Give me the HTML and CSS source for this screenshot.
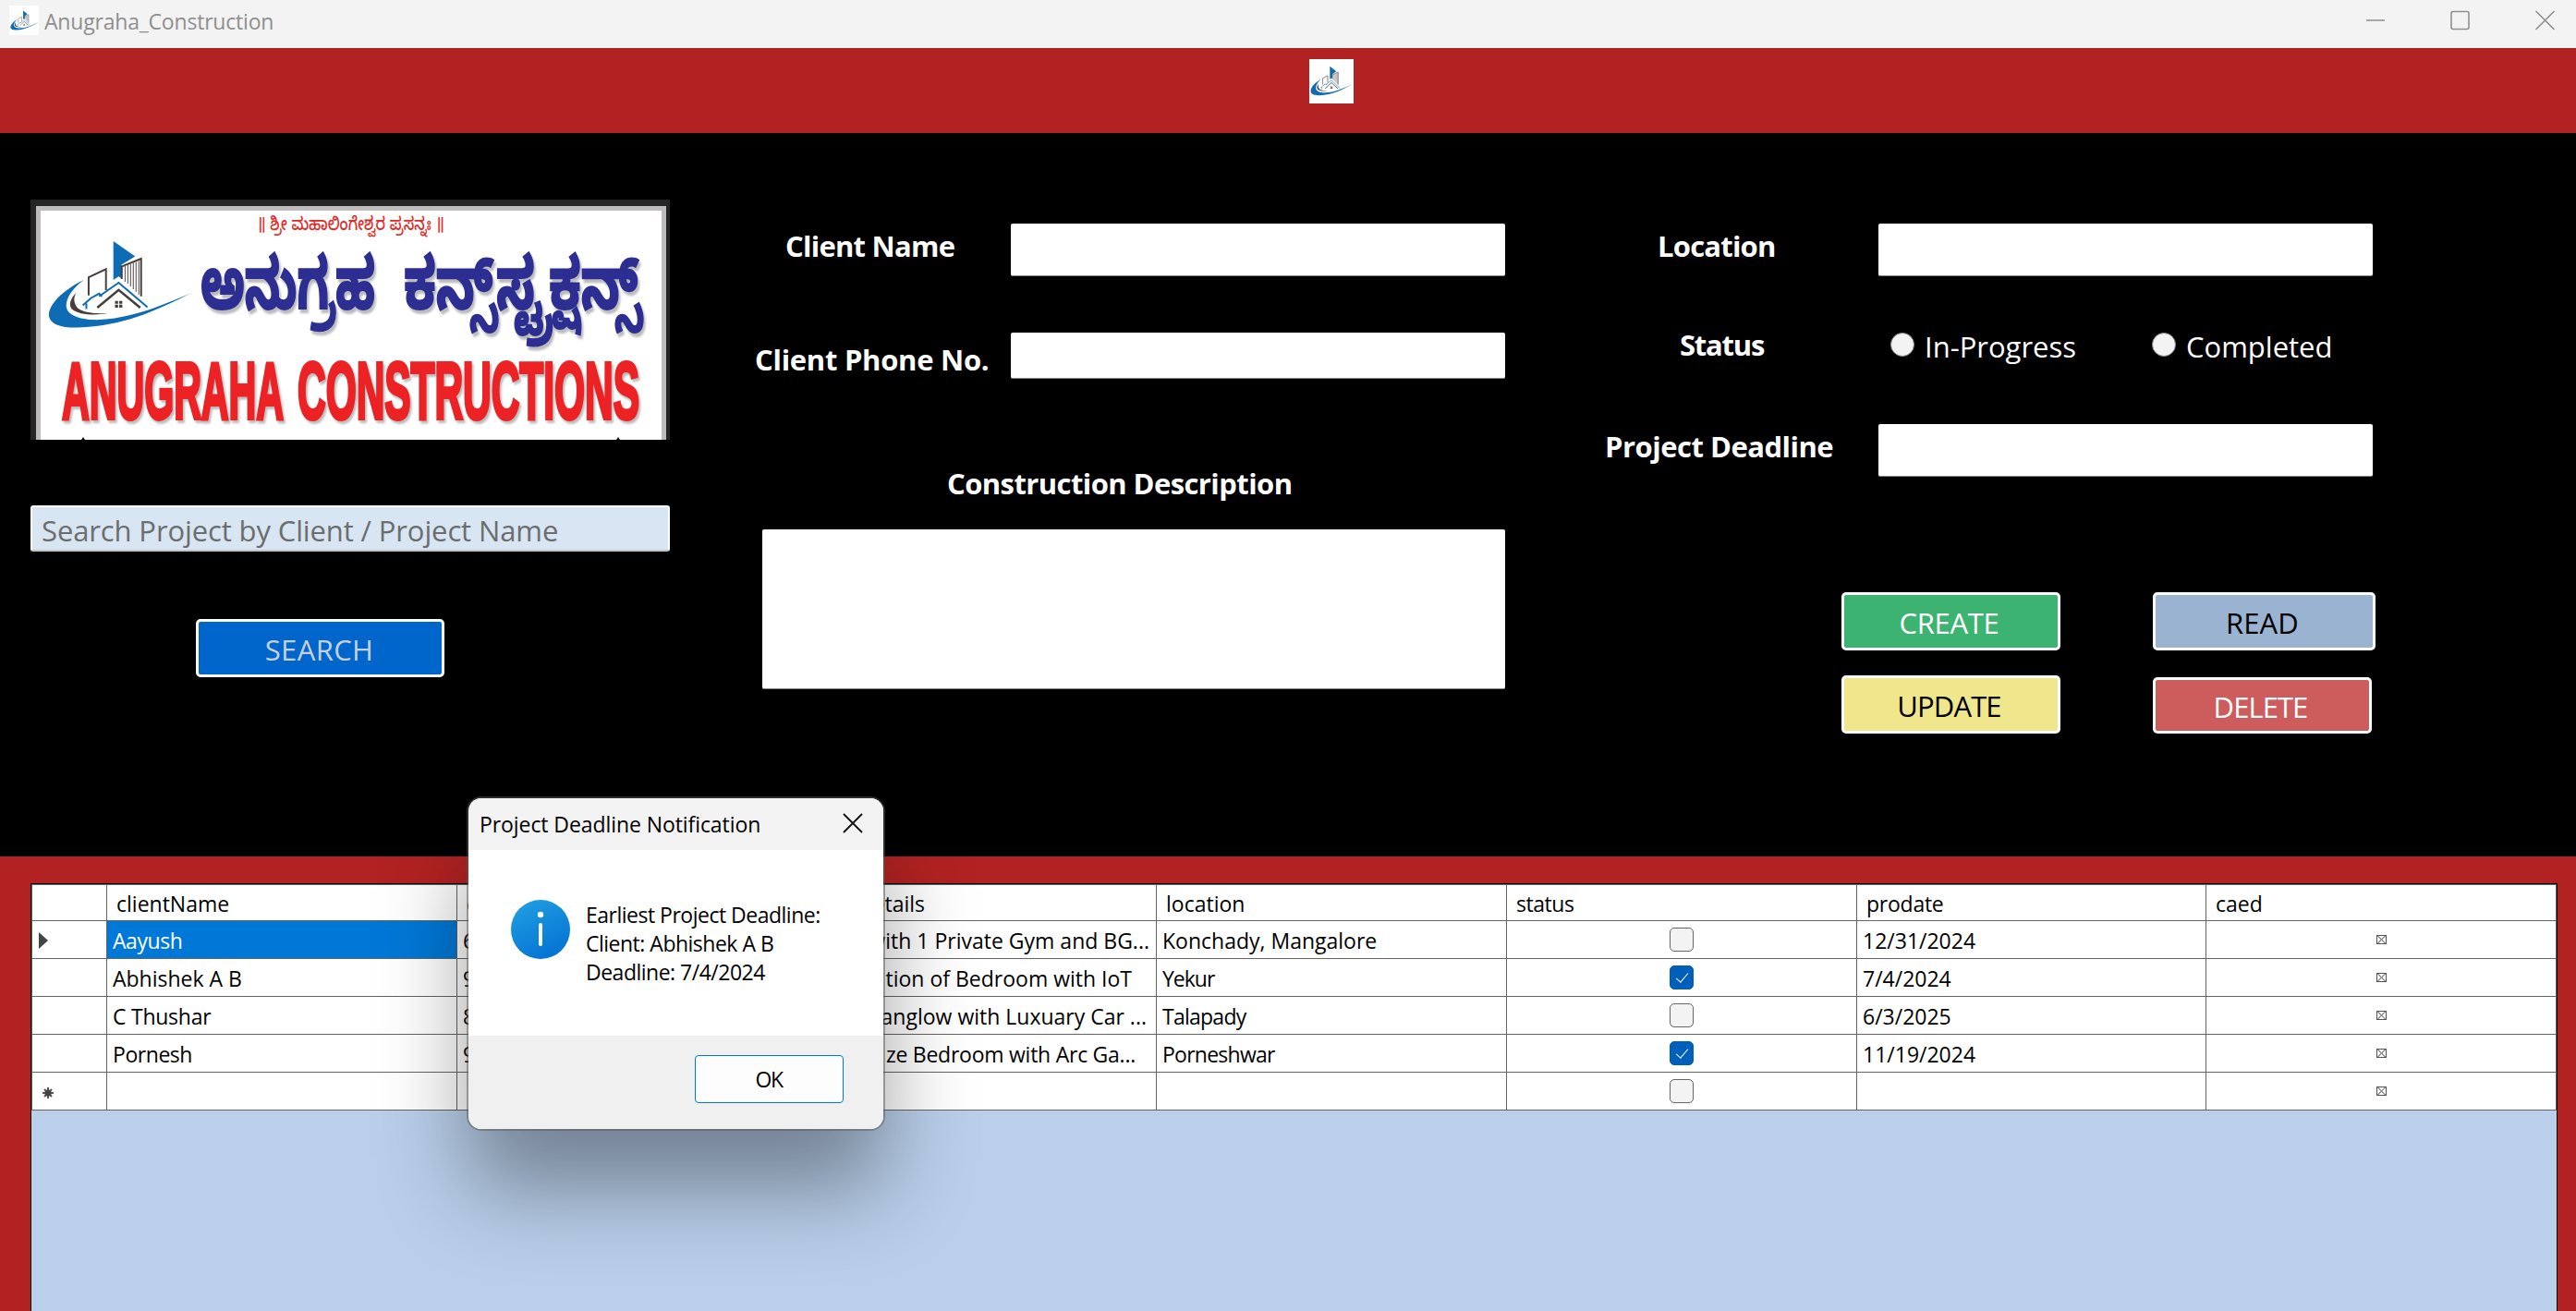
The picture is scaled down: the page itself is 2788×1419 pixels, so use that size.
FILE: index.html
```html
<!DOCTYPE html>
<html lang="en">
<head>
<meta charset="utf-8">
<title>Anugraha_Construction</title>
<link rel="stylesheet" href="styles.css">
</head>
<body>
<svg class="defs" width="0" height="0" aria-hidden="true">
  <symbol id="logo" viewBox="50 258 160 100" preserveAspectRatio="none">
    <path fill="#0d6cb4" d="M90 303C66 315 51 331 52 343C54 353 67 356 84 355.500C132 354 168 338 208.500 317C172 333 140 346 104 347C84 347 70 341 71 330C72 320 80 311 90 303Z"/>
    <path fill="#453e3c" d="M82 317C76 323 73 330 77 335C85 342 103 342 116 340C101 340 86 339 82 332C79 327 79 322 82 317Z"/>
    <path fill="#0d6cb4" d="M122.600 260L146.500 277L131.500 286L131.500 301L128.400 299L122.600 303Z"/>
    <path fill="none" stroke="#453e3c" stroke-width="2" d="M95.500 320V300L114.500 291V314M131.800 302V288L153 279.500V321"/>
    <path fill="none" stroke="#6b6663" stroke-width="1.200" d="M135.500 287V305M138.500 286V307M141.500 285V310M144.500 284V313M147.500 283V316M150.500 282V319"/>
    <path fill="none" stroke="#0d6cb4" stroke-width="2" d="M89 331L98 323L107 318L110 321M93 335V329M107 321L128.400 306L160 333"/>
    <path fill="none" stroke="#453e3c" stroke-width="2.600" d="M105 333.500L128.400 314L152 333.500"/>
    <path fill="#453e3c" d="M124.400 326h3.400v3.300h-3.400zM129 326h3.400v3.300H129zM124.400 330.300h3.400v3.300h-3.400zM129 330.300h3.400v3.300H129z"/>
  </symbol>
</svg>

<header class="titlebar">
  <span class="app-icon"><svg><use href="#logo"/></svg></span>
  <span class="app-title">Anugraha_Construction</span>
  <svg class="window-controls" viewBox="0 0 206 22" fill="none" stroke="#8e8e8e" stroke-width="1.600">
    <path d="M1 11h20M184.500 1l20 20M204.500 1l-20 20"/>
    <rect x="93" y="1.500" width="19" height="19" rx="2"/>
  </svg>
</header>

<div class="banner"><span class="banner-icon"><svg><use href="#logo"/></svg></span></div>

<main class="form">
  <section class="brand">
    <svg class="sign" viewBox="33 216 692 260">
      <rect x="33" y="216" width="692" height="260" fill="#252525"/>
      <rect x="39" y="223" width="682" height="253" fill="#bdbbbc"/>
      <rect x="44" y="228" width="672" height="248" fill="#fff"/>
      <svg x="51" y="259" width="158" height="98"><use href="#logo"/></svg>
      <text class="sign-top" x="278" y="249" textLength="203" lengthAdjust="spacingAndGlyphs">॥ ಶ್ರೀ ಮಹಾಲಿಂಗೇಶ್ವರ ಪ್ರಸನ್ನಃ ॥</text>
      <text class="sign-kn" x="217" y="334" textLength="189" lengthAdjust="spacingAndGlyphs">ಅನುಗ್ರಹ</text>
      <text class="sign-kn" x="437" y="334" textLength="257" lengthAdjust="spacingAndGlyphs">ಕನ್ಸ್‌ಸ್ಟ್ರಕ್ಷನ್ಸ್</text>
      <text class="sign-en" x="67" y="453" textLength="240" lengthAdjust="spacingAndGlyphs">ANUGRAHA</text>
      <text class="sign-en" x="322" y="453" textLength="370" lengthAdjust="spacingAndGlyphs">CONSTRUCTIONS</text>
      <path d="M88 476l2-3 2 3zM667 476l2-3 2 3z" fill="#111"/>
    </svg>
    <div class="search-box"><span>Search Project by Client / Project Name</span></div>
    <div class="btn btn-search"><span>SEARCH</span></div>
  </section>

  <section class="client">
    <div class="row row-name"><label>Client Name</label><div class="input"></div></div>
    <div class="row row-phone"><label>Client Phone No.</label><div class="input"></div></div>
    <label class="desc-label">Construction Description</label>
    <div class="input desc"></div>
  </section>

  <section class="project">
    <div class="row row-location"><label>Location</label><div class="input"></div></div>
    <div class="row row-status"><label>Status</label>
      <div class="radio"><i></i><span>In-Progress</span></div>
      <div class="radio radio-done"><i></i><span>Completed</span></div>
    </div>
    <div class="row row-deadline"><label>Project Deadline</label><div class="input"></div></div>
    <div class="actions">
      <div class="btn btn-create"><span>CREATE</span></div>
      <div class="btn btn-read"><span>READ</span></div>
      <div class="btn btn-update"><span>UPDATE</span></div>
      <div class="btn btn-delete"><span>DELETE</span></div>
    </div>
  </section>
</main>

<section class="records">
  <div class="grid">
    <div class="tr th"><div></div><div>clientName</div><div>c</div><div class="details-head">details</div><div>location</div><div class="tight">status</div><div class="snug">prodate</div><div>caed</div></div>
    <div class="tr"><div class="mark"><svg width="10" height="18"><path d="M0 0L10 9L0 18Z" fill="#444"/></svg></div><div class="selected tight">Aayush</div><div>6</div><div class="details d1"><span>with 1 Private Gym and BG...</span></div><div>Konchady, Mangalore</div><div class="center"><i class="check"></i></div><div>12/31/2024</div><div class="center"><i class="missing"></i></div></div>
    <div class="tr"><div></div><div>Abhishek A B</div><div>9</div><div class="details d2"><span>tion of Bedroom with IoT</span></div><div class="tightest">Yekur</div><div class="center"><i class="check on"></i></div><div>7/4/2024</div><div class="center"><i class="missing"></i></div></div>
    <div class="tr"><div></div><div class="snug">C Thushar</div><div>8</div><div class="details d3"><span>Banglow with Luxuary Car ...</span></div><div class="tighter">Talapady</div><div class="center"><i class="check"></i></div><div>6/3/2025</div><div class="center"><i class="missing"></i></div></div>
    <div class="tr"><div></div><div class="tight">Pornesh</div><div>9</div><div class="details d4 snug"><span>ze Bedroom with Arc Ga...</span></div><div class="tighter">Porneshwar</div><div class="center"><i class="check on"></i></div><div>11/19/2024</div><div class="center"><i class="missing"></i></div></div>
    <div class="tr"><div class="mark mark-new"><svg width="12" height="12"><path d="M6 0V12M0 6H12M2 2L10 10M10 2L2 10" stroke="#555" stroke-width="2"/><circle cx="6" cy="6" r="3.600" fill="#444"/></svg></div><div></div><div></div><div></div><div></div><div class="center"><i class="check"></i></div><div></div><div class="center"><i class="missing"></i></div></div>
  </div>
</section>

<div class="dialog">
  <div class="dialog-title"><span>Project Deadline Notification</span>
    <svg width="22" height="22" viewBox="0 0 22 22" stroke="#111" stroke-width="1.800"><path d="M1 1l20 20M21 1L1 21"/></svg>
  </div>
  <div class="dialog-body">
    <svg width="64" height="64" viewBox="0 0 64 64">
      <defs><linearGradient id="info" x1="0.200" y1="0" x2="0.700" y2="1"><stop offset="0" stop-color="#1f9ee2"/><stop offset="1" stop-color="#0472d3"/></linearGradient></defs>
      <circle cx="32" cy="32" r="32" fill="url(#info)"/><circle cx="32" cy="16" r="3.200" fill="#fff"/><rect x="30" y="25" width="4" height="25" rx="2" fill="#f4f9fd"/>
    </svg>
    <p>Earliest Project Deadline:<br>Client: Abhishek A B<br>Deadline: 7/4/2024</p>
  </div>
  <div class="dialog-foot"><div class="ok">OK</div></div>
</div>
</body>
</html>
```
FILE: styles.css
```css
* { box-sizing: border-box; }
body {
  margin: 0; width: 2788px; height: 1419px; overflow: hidden;
  display: flex; flex-direction: column; position: relative;
  background: #000; color: #000;
  font: 23px/32px "Open Sans", "Noto Sans", sans-serif;
}
span, label { white-space: nowrap; }
.defs { position: absolute; }

.titlebar { height: 52px; background: #f3f3f3; display: flex; color: #8f8f8f; padding: 6px 22px 0 10px; }
.app-icon { width: 32px; height: 32px; background: #fff; padding: 5px 0 0 1px; }
.app-icon svg { display: block; width: 31px; height: 22px; }
.app-title { margin: 1px 0 0 6px; letter-spacing: -.2px; }
.window-controls { width: 206px; height: 22px; margin: 5px 0 0 auto; }

.banner { height: 92px; background: #b22222; display: flex; padding: 12px 0 0 1417px; }
.banner-icon { width: 48px; height: 48px; background: #fff; padding: 7px 0 0 1px; }
.banner-icon svg { display: block; width: 47px; height: 33px; }

.form { height: 783px; display: flex; font-size: 31px; line-height: 44px; color: #fff; }
.brand { width: 692px; margin-left: 33px; padding-top: 72px; }
.sign { display: block; width: 692px; height: 260px; }
.sign-top { font: 500 20px "Noto Sans Kannada", "Noto Sans", sans-serif; fill: #e02c28; }
.sign-kn { font: bold 77px "Noto Sans Kannada", "Noto Sans", sans-serif; fill: #2c2e92; stroke: #2c2e92; stroke-width: 2; filter: drop-shadow(2px 4px 1px #bbb); }
.sign-en { font: bold 88px "Liberation Sans Narrow", "Liberation Sans", sans-serif; fill: #ec2224; stroke: #ec2224; stroke-width: 4; filter: drop-shadow(2px 3px 1px #bbb); }
.search-box { margin-top: 71px; height: 50px; border: 2px solid #fff; border-bottom-color: #c4c4c4; border-radius: 3px; background: #d8e5f2; color: #6d6d6d; padding: 3px 0 0 10px; letter-spacing: -.12px; }

.btn { border: 3px solid #fff; border-radius: 5px; height: 63px; display: flex; justify-content: center; padding: 8px 4px 0 0; }
.btn-search { width: 269px; margin: 73px 0 0 179px; padding-right: 2px; background: #0066cc; color: #c5d0da; letter-spacing: .4px; }

.client { width: 819px; margin-left: 85px; padding-top: 98px; }
.row { display: flex; justify-content: flex-end; }
.row label, .desc-label { font-weight: bold; }
.input { width: 535px; height: 57px; background: #fff; border-bottom: 1px solid #858585; border-radius: 2px; flex: none; }
.row label { flex: 1; }
.row-name label { padding: 2px 0 0 40px; letter-spacing: -.76px; }
.row-phone { margin-top: 61px; }
.row-phone label { padding: 7px 0 0 7px; letter-spacing: -.28px; }
.row-phone .input { height: 50px; }
.desc-label { display: block; margin-top: 90px; padding-left: 215px; letter-spacing: -.58px; }
.desc { width: 804px; height: 173px; margin: 28px 0 0 15px; }

.project { width: 840px; margin-left: 101px; padding-top: 98px; }
.project .row { width: 838px; }
.row-location label { padding: 2px 0 0 64px; letter-spacing: -.78px; }
.row-status { margin-top: 51px; height: 44px; }
.row-status label { padding: 1px 0 0 88px; flex: 0 0 316px; letter-spacing: -1.22px; }
.radio { flex: 0 0 283px; display: flex; padding-top: 3px; }
.radio-done { flex-basis: 239px; }
.radio i { width: 26px; height: 26px; margin: 7px 11px 0 0; border-radius: 50%; background: #f3f3f3; border: 1px solid #8a8a8a; }
.row-deadline { margin-top: 65px; }
.row-deadline label { padding: 2px 0 0 7px; letter-spacing: -.5px; }
.actions { display: grid; grid-template-columns: 337px 241px; grid-template-rows: 90px 63px; margin: 125px 0 0 263px; }
.btn-create { width: 237px; background: #3cb371; letter-spacing: -.31px; }
.btn-read { width: 241px; background: #9ab3d1; color: #000; letter-spacing: .1px; }
.btn-update { width: 237px; background: #f0e68c; color: #000; letter-spacing: -.88px; }
.btn-delete { width: 237px; height: 61px; margin-top: 2px; padding-top: 7px; background: #cd5c5c; letter-spacing: -.94px; }

.records { height: 492px; background: #b22222; padding: 29px 20px 0 33px; }
.grid { height: 463px; background: #b9cfea; border: 1px solid #000; border-bottom: 0; }
.tr { display: grid; grid-template-columns: 81px 379px 379px 378px 379px 379px 378px 379px; height: 41px; background: #fff; border-left: 1px solid #646464; }
.tr > div { border-right: 1px solid #646464; border-bottom: 1px solid #646464; padding: 5px 0 0 6px; overflow: hidden; white-space: nowrap; }
.tr > .snug { letter-spacing: -.25px; }
.tr > .tight { letter-spacing: -.45px; }
.tr > .tighter { letter-spacing: -.75px; }
.tr > .tightest { letter-spacing: -1px; }
.th { height: 40px; border-top: 1px solid #646464; }
.th > div { padding: 4px 0 0 10px; }
.th > .details-head { text-align: right; padding-right: 250px; }
.tr > .mark { padding: 12px 0 0 7px; }
.tr > .mark-new { padding: 16px 0 0 11px; }
.mark svg { display: block; }
.tr > .selected { background: #0078d7; color: #fff; }
.tr > .details { display: flex; justify-content: flex-end; }
.tr > .d1 { padding-right: 7px; }
.tr > .d2 { padding-right: 26px; }
.tr > .d3 { padding-right: 10px; }
.tr > .d4 { padding-right: 22px; }
.tr > .center { display: flex; justify-content: center; align-items: center; padding: 0; }
.check { width: 26px; height: 26px; border: 1.5px solid #666; border-radius: 5px; background: #f3f3f3; }
.check.on { background: #005fb8; border-color: #005fb8; display: flex; justify-content: center; padding-top: 4px; }
.check.on::after { content: ""; width: 6px; height: 12px; border: solid #fff; border-width: 0 1.5px 1.5px 0; transform: rotate(40deg); }
.missing { width: 11px; height: 10px; border: 1px solid #555; background: linear-gradient(42deg, transparent 44%, #999 44% 56%, transparent 56%), linear-gradient(-42deg, transparent 44%, #999 44% 56%, transparent 56%); }

.dialog { position: absolute; left: 507px; top: 864px; width: 449px; height: 358px; border-radius: 14px; background: #fff; box-shadow: 0 0 0 2px rgba(90,90,90,.5), 0 64px 96px rgba(0,0,0,.38); }
.dialog-title { height: 56px; background: #f3f3f3; border-radius: 14px 14px 0 0; display: flex; justify-content: space-between; padding: 12px 22px 0 12px; letter-spacing: -.08px; }
.dialog-title svg { margin-top: 4px; }
.dialog-body { height: 201px; display: flex; padding: 54px 0 0 46px; }
.dialog-body p { margin: 1px 0 0 17px; line-height: 31px; letter-spacing: -.5px; }
.dialog-foot { height: 101px; background: #f0f0f0; border-radius: 0 0 14px 14px; padding: 21px 43px 0 0; display: flex; justify-content: flex-end; }
.ok { width: 161px; height: 52px; border: 1.5px solid #0078d4; border-radius: 4px; background: #fdfdfd; text-align: center; padding: 9px 1px 0 0; letter-spacing: -1.5px; }
```
